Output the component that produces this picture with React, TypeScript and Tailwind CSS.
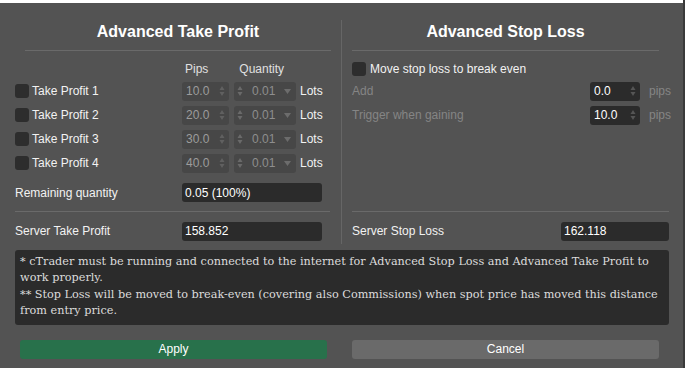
const sans = { fontFamily: '"Liberation Sans", Arial, sans-serif' };

function Check() {
  return <div className="w-[14px] h-[14px] rounded-[3px] bg-[#2d2d2d] shrink-0" />;
}

function UpDown({ className = "" }: { className?: string }) {
  return (
    <svg width="6" height="12" viewBox="0 0 6 12" className={className}>
      <path d="M3 1 L5.5 5 L0.5 5 Z" fill="currentColor" />
      <path d="M3 11 L5.5 7 L0.5 7 Z" fill="currentColor" />
    </svg>
  );
}

function PipsBox({ value }: { value: string }) {
  return (
    <div className="w-[47px] h-[19px] rounded-[3px] bg-[#474747] flex items-center justify-between pl-[4px] pr-[4px]">
      <span className="text-[#9c9c9c]">{value}</span>
      <UpDown className="text-[#606060]" />
    </div>
  );
}

function QtyBox() {
  return (
    <div className="w-[62px] h-[19px] rounded-[3px] bg-[#474747] flex items-center pl-[3px] pr-[5px]">
      <UpDown className="text-[#6a6a6a]" />
      <span className="ml-[9px] text-[#8e8e8e]">0.01</span>
      <svg width="7" height="5" viewBox="0 0 7 5" className="ml-auto text-[#6c6c6c]">
        <path d="M0 0 L7 0 L3.5 5 Z" fill="currentColor" />
      </svg>
    </div>
  );
}

function DarkBox({ value, w }: { value: string; w: string }) {
  return (
    <div className={`${w} h-[19px] rounded-[3px] bg-[#2b2b2b] flex items-center px-[3px] text-white`}>
      {value}
    </div>
  );
}

function TpRow({ n, pips }: { n: number; pips: string }) {
  return (
    <div className="h-[24px] flex items-center">
      <Check />
      <span className="ml-[3px] w-[150px] text-[#f2f2f2]">Take Profit {n}</span>
      <PipsBox value={pips} />
      <div className="ml-[5px]">
        <QtyBox />
      </div>
      <span className="ml-[4px] text-[#f2f2f2]">Lots</span>
    </div>
  );
}

function SlInput({ label, value }: { label: string; value: string }) {
  return (
    <div className="h-[24px] flex items-center">
      <span className="text-[#858585] w-[238px]">{label}</span>
      <div className="w-[50px] h-[19px] rounded-[3px] bg-[#2b2b2b] flex items-center justify-between px-[4px]">
        <span className="text-white">{value}</span>
        <UpDown className="text-[#555]" />
      </div>
      <span className="ml-[9px] text-[#858585]">pips</span>
    </div>
  );
}

export default function App() {
  return (
    <div className="w-[685px] h-[368px] flex bg-[#535353] text-[12px] overflow-hidden" style={sans}>
      <div className="w-[683px] flex flex-col">
        <div className="h-[3px] bg-white" />
        <div className="flex h-[241px]">
          {/* left: take profit */}
          <div className="w-[341px] flex flex-col pl-[15px]">
            <div className="ml-[10px] w-[306px] pt-[19px] h-[48px] border-b border-[#6a6a6a] text-center text-[16px] font-bold text-white leading-[20px]">
              Advanced Take Profit
            </div>
            <div className="h-[16px] mt-[10px] flex items-center text-[#e0e0e0]">
              <span className="ml-[170px]">Pips</span>
              <span className="ml-[31px]">Quantity</span>
            </div>
            <div className="mt-[2px]">
              <TpRow n={1} pips="10.0" />
              <TpRow n={2} pips="20.0" />
              <TpRow n={3} pips="30.0" />
              <TpRow n={4} pips="40.0" />
            </div>
            <div className="h-[23px] mt-[6px] flex items-center">
              <span className="w-[167px] text-[#f2f2f2]">Remaining quantity</span>
              <DarkBox value="0.05 (100%)" w="w-[140px]" />
            </div>
            <div className="mt-[7px] w-[315px] border-t border-[#6a6a6a]" />
            <div className="h-[20px] mt-[9px] flex items-center">
              <span className="w-[167px] text-[#f2f2f2]">Server Take Profit</span>
              <DarkBox value="158.852" w="w-[140px]" />
            </div>
          </div>
          <div className="w-px mt-[17px] bg-[#666]" />
          {/* right: stop loss */}
          <div className="flex-1 flex flex-col pl-[10px]">
            <div className="w-[307px] pt-[19px] h-[48px] border-b border-[#6a6a6a] text-center text-[16px] font-bold text-white leading-[20px]">
              Advanced Stop Loss
            </div>
            <div className="h-[16px] mt-[10px] flex items-center">
              <Check />
              <span className="ml-[4px] text-[#f2f2f2]">Move stop loss to break even</span>
            </div>
            <div className="mt-[2px]">
              <SlInput label="Add" value="0.0" />
              <SlInput label="Trigger when gaining" value="10.0" />
            </div>
            <div className="mt-[84px] w-[317px] border-t border-[#6a6a6a]" />
            <div className="h-[20px] mt-[9px] flex items-center">
              <span className="w-[209px] text-[#f2f2f2]">Server Stop Loss</span>
              <DarkBox value="162.118" w="w-[108px]" />
            </div>
          </div>
        </div>
        <div
          className="mx-[15px] mt-[6px] h-[75px] w-[654px] rounded-[3px] bg-[#2b2b2b] px-[5px] pt-[4px] text-[11.25px] leading-[16.3px] text-[#dcdcdc]"
          style={{ fontFamily: '"DejaVu Serif", "Liberation Serif", serif' }}
        >
          <p>* cTrader must be running and connected to the internet for Advanced Stop Loss and Advanced Take Profit to work properly.</p>
          <p>** Stop Loss will be moved to break-even (covering also Commissions) when spot price has moved this distance from entry price.</p>
        </div>
        <div className="flex mt-[15px]">
          <button className="ml-[20px] w-[307px] h-[19px] rounded-[3px] bg-[#28714b] text-white leading-[19px]">Apply</button>
          <button className="ml-[25px] w-[307px] h-[19px] rounded-[3px] bg-[#6a6a6a] text-white leading-[19px]">Cancel</button>
        </div>
      </div>
      <div className="w-[2px] bg-[#3a3a3a]" />
    </div>
  );
}
